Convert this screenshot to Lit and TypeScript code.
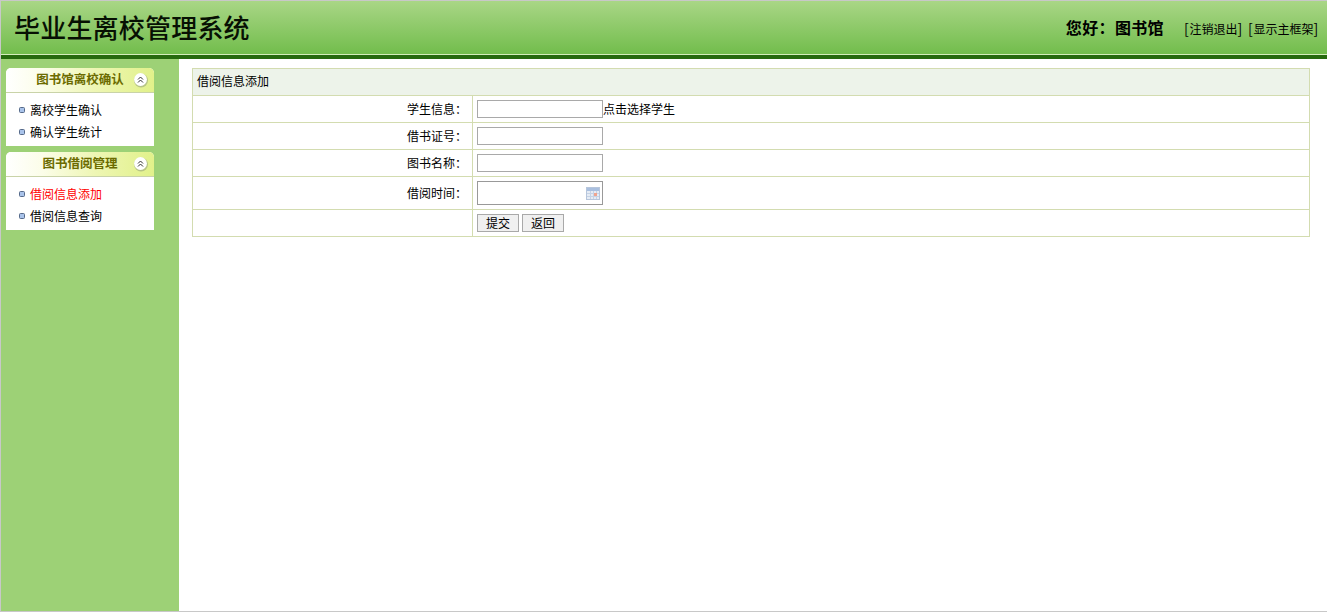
import { LitElement, html, css, svg } from "lit";
import { customElement } from "lit/decorators.js";

const collapseIcon = svg`<svg class="collapse" width="16" height="16" viewBox="0 0 16 16">
  <circle cx="8" cy="8.5" r="7" fill="#9aa67e" opacity=".6"/>
  <circle cx="7.5" cy="7.5" r="6.4" fill="#fff"/>
  <path d="M5 7.5 7.5 5 10 7.5M5 10.5 7.5 8 10 10.5" fill="none" stroke="#333" stroke-width="1"/>
</svg>`;

const calendarIcon = svg`<svg class="cal" width="14" height="13" viewBox="0 0 14 13">
  <rect x=".5" y=".5" width="13" height="12" fill="#e6ecf5" stroke="#b7c6dc"/>
  <rect x="1" y="1" width="12" height="3" fill="#a9bfdf"/>
  <path d="M1 6.5h12M1 9.5h12M4.5 4v8M7.5 4v8M10.5 4v8" stroke="#c6d3e5"/>
  <rect x="8" y="6" width="3" height="3" fill="#f0a48f"/>
</svg>`;

@customElement("app-root")
export class AppRoot extends LitElement {
  static styles = css`
    :host {
      display: block;
      height: 612px;
      box-sizing: border-box;
      border: 1px solid #c8c8c8;
      border-right: 0;
      font: 12px/14px "Noto Sans CJK SC", "Liberation Sans", sans-serif;
      color: #000;
      background: #fff;
      overflow: hidden;
    }
    .header {
      height: 53px;
      background: linear-gradient(#a9d686, #72bd4c);
      border-bottom: 1px solid #d4eebb;
      display: flex;
      align-items: center;
      justify-content: space-between;
      padding: 0 8px 0 13px;
    }
    .title {
      font-size: 26px;
      line-height: 30px;
      font-weight: 500;
      color: #071003;
      letter-spacing: 0.2px;
      margin-top: -1px;
    }
    .user { display: flex; align-items: center; margin-top: -1px; }
    .hello { font-size: 16px; font-weight: 700; margin-right: 20px; letter-spacing: 0.35px; }
    .links { font-size: 12px; display: flex; gap: 5px; margin-top: 2px; }
    .br { display: inline-block; width: 5.5px; font-size: 14px; font-style: normal; }
    .bar { height: 4px; background: #266a0e; }
    .body { display: flex; height: 552px; }
    .side {
      width: 178px;
      flex: none;
      background: #9dd176;
      padding: 9px 25px 0 5px;
      box-sizing: border-box;
      display: flex;
      flex-direction: column;
      gap: 6px;
    }
    .menu { background: #fff; border-radius: 5px 5px 0 0; overflow: hidden; }
    .menu-head {
      height: 25px;
      box-sizing: border-box;
      border-bottom: 1px solid #c9d3a8;
      background: linear-gradient(90deg, #fff 0%, #fbfde8 25%, #eef6b4 60%, #e1f18a 100%);
      display: flex;
      align-items: center;
      position: relative;
      padding: 0 0 3px 0;
    }
    .menu-head span {
      flex: 1;
      text-align: center;
      font-size: 12.5px;
      font-weight: 700;
      color: #6b6b00;
    }
    .collapse { position: absolute; right: 5px; top: 4px; }
    .items { padding: 6px 0 3px 13px; }
    .item {
      height: 22px;
      display: flex;
      align-items: center;
      gap: 5px;
      font-size: 12px;
    }
    .item.on { color: #f00; }
    .bullet {
      width: 6px;
      height: 6px;
      box-sizing: border-box;
      border: 1px solid #566a8a;
      border-radius: 1.5px;
      background: #a9c3ea;
    }
    .main { flex: 1; padding: 9px 17px 0 13px; }
    table {
      border-collapse: collapse;
      width: 1118px;
      table-layout: fixed;
    }
    .c1 { width: 280px; }
    td {
      border: 1px solid #d3dcb0;
      padding: 0;
      height: 26px;
      box-sizing: content-box;
    }
    .head td { background: #edf3ea; padding: 0 0 2px 4px; height: 24px; }
    .label { text-align: right; }
    .label span { margin-right: 5px; display: inline-block; }
    .field { padding-left: 4px; }
    .row { display: flex; align-items: center; }
    .tall td { height: 32px; }
    .input {
      width: 126px;
      height: 18px;
      box-sizing: border-box;
      border: 1px solid #a9a9a9;
      background: #fff;
    }
    .date {
      height: 24px;
      border-color: #999;
      display: flex;
      align-items: center;
      justify-content: flex-end;
      padding-right: 2px;
    }
    .btn {
      width: 42px;
      height: 18px;
      box-sizing: border-box;
      border: 1px solid #a9a9a9;
      background: #f0f0f0;
      font: inherit;
      color: #000;
      padding: 0;
      margin-right: 3px;
    }
  `;

  private menu(title: string, items: string[], on = "") {
    return html`<div class="menu">
      <div class="menu-head"><span>${title}</span>${collapseIcon}</div>
      <div class="items">
        ${items.map(
          (i) => html`<div class="item ${i === on ? "on" : ""}"><i class="bullet"></i>${i}</div>`
        )}
      </div>
    </div>`;
  }

  private link(text: string) {
    return html`<span><i class="br">[</i>${text}<i class="br">]</i></span>`;
  }

  render() {
    return html`
      <div class="header">
        <div class="title">毕业生离校管理系统</div>
        <div class="user">
          <div class="hello">您好：图书馆</div>
          <div class="links">${this.link("注销退出")}${this.link("显示主框架")}</div>
        </div>
      </div>
      <div class="bar"></div>
      <div class="body">
        <div class="side">
          ${this.menu("图书馆离校确认", ["离校学生确认", "确认学生统计"])}
          ${this.menu("图书借阅管理", ["借阅信息添加", "借阅信息查询"], "借阅信息添加")}
        </div>
        <div class="main">
          <table>
            <colgroup><col class="c1" /><col /></colgroup>
            <tr class="head"><td colspan="2">借阅信息添加</td></tr>
            <tr>
              <td class="label"><span>学生信息：</span></td>
              <td class="field"><div class="row"><div class="input"></div>点击选择学生</div></td>
            </tr>
            <tr>
              <td class="label"><span>借书证号：</span></td>
              <td class="field"><div class="row"><div class="input"></div></div></td>
            </tr>
            <tr>
              <td class="label"><span>图书名称：</span></td>
              <td class="field"><div class="row"><div class="input"></div></div></td>
            </tr>
            <tr class="tall">
              <td class="label"><span>借阅时间：</span></td>
              <td class="field"><div class="row"><div class="input date">${calendarIcon}</div></div></td>
            </tr>
            <tr>
              <td class="label"></td>
              <td class="field"><div class="row"><button class="btn">提交</button><button class="btn">返回</button></div></td>
            </tr>
          </table>
        </div>
      </div>
    `;
  }
}
